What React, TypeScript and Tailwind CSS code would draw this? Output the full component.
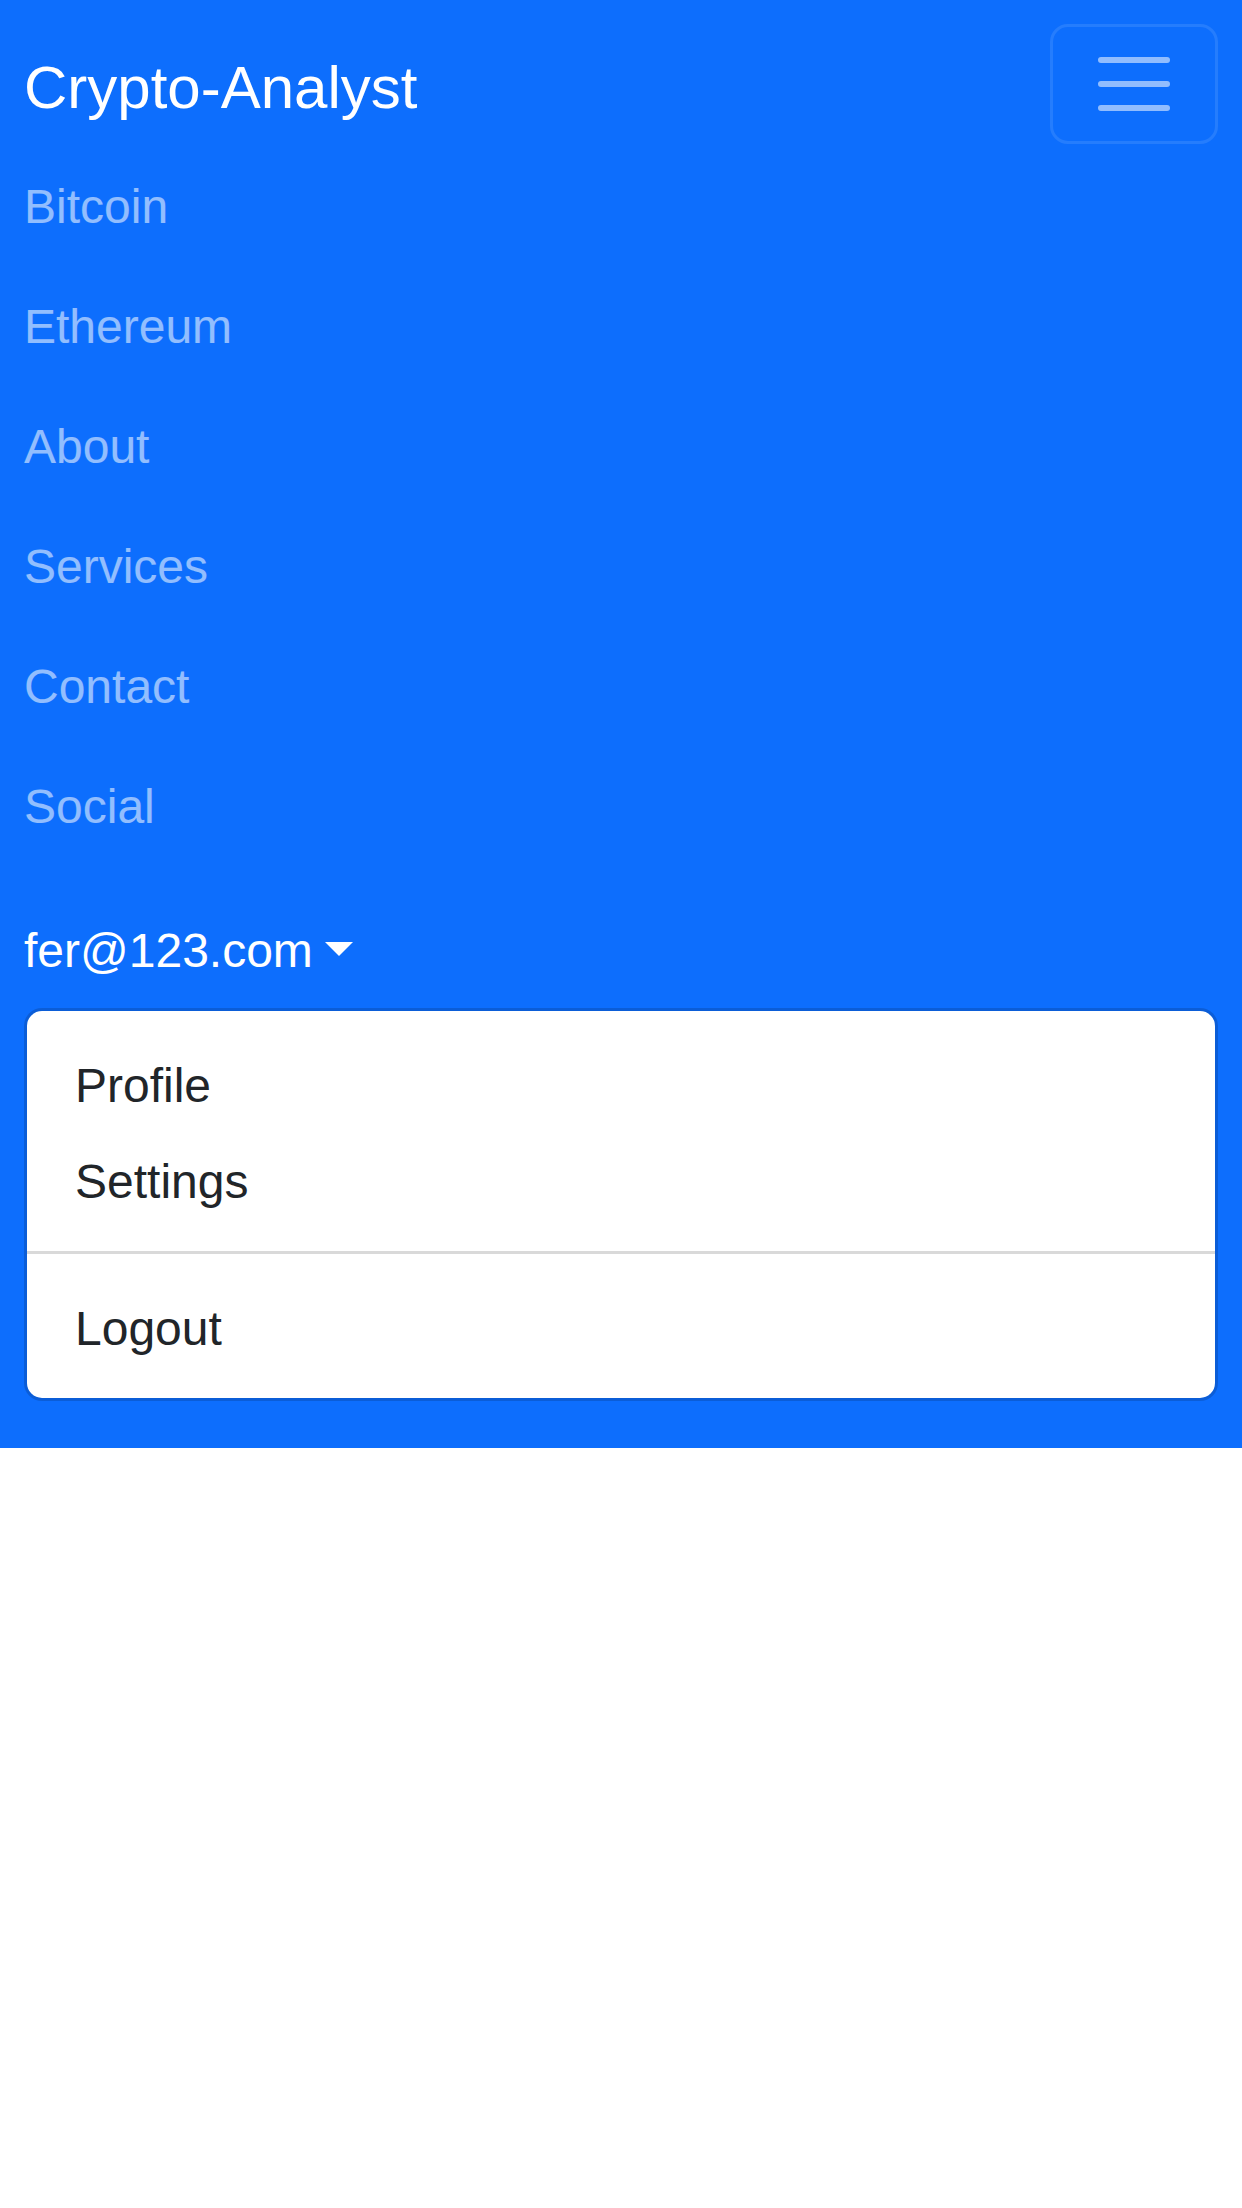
import * as React from "react"

const links = ["Bitcoin", "Ethereum", "About", "Services", "Contact", "Social"]

function TogglerIcon() {
  return (
    <svg width="90" height="90" viewBox="0 0 30 30" aria-hidden="true">
      <path
        d="M4 7h22M4 15h22M4 23h22"
        stroke="rgba(255,255,255,0.55)"
        strokeWidth="2"
        strokeLinecap="round"
        strokeMiterlimit="10"
        fill="none"
      />
    </svg>
  )
}

export default function App() {
  return (
    <div className="min-h-[2208px] bg-white font-['Liberation_Sans',Arial,sans-serif]">
      <nav className="bg-[#0d6efd] pt-[24px] pb-[47px]">
        <div className="px-[24px]">
          {/* Brand + toggler */}
          <div className="flex items-center justify-between">
            <a className="pt-[19px] pb-[11px] text-[60px] leading-[90px] text-white">
              Crypto-Analyst
            </a>
            <button className="flex h-[120px] w-[168px] items-center justify-center rounded-[18px] border-[3px] border-white/10">
              <TogglerIcon />
            </button>
          </div>

          {/* Collapsed nav */}
          <ul className="flex flex-col">
            {links.map((l) => (
              <li key={l}>
                <a className="block pt-[27px] pb-[21px] text-[48px] leading-[72px] text-white/55">
                  {l}
                </a>
              </li>
            ))}
          </ul>

          <ul className="mt-[24px] flex flex-col">
            <li>
              <a className="flex items-center pt-[27px] pb-[21px] text-[48px] leading-[72px] text-white">
                fer@123.com
                <span className="ml-[12px] mt-[-4px] h-0 w-0 border-x-[14px] border-t-[14px] border-x-transparent border-t-white" />
              </a>
              {/* Dropdown */}
              <div className="rounded-[18px] border-[3px] border-black/15 bg-white bg-clip-padding py-[24px]">
                <a className="block px-[48px] pt-[15px] pb-[9px] text-[48px] leading-[72px] text-[#212529]">
                  Profile
                </a>
                <a className="block px-[48px] pt-[15px] pb-[9px] text-[48px] leading-[72px] text-[#212529]">
                  Settings
                </a>
                <div className="my-[24px] border-t-[3px] border-black/15" />
                <a className="block px-[48px] pt-[15px] pb-[9px] text-[48px] leading-[72px] text-[#212529]">
                  Logout
                </a>
              </div>
            </li>
          </ul>
        </div>
      </nav>
    </div>
  )
}
